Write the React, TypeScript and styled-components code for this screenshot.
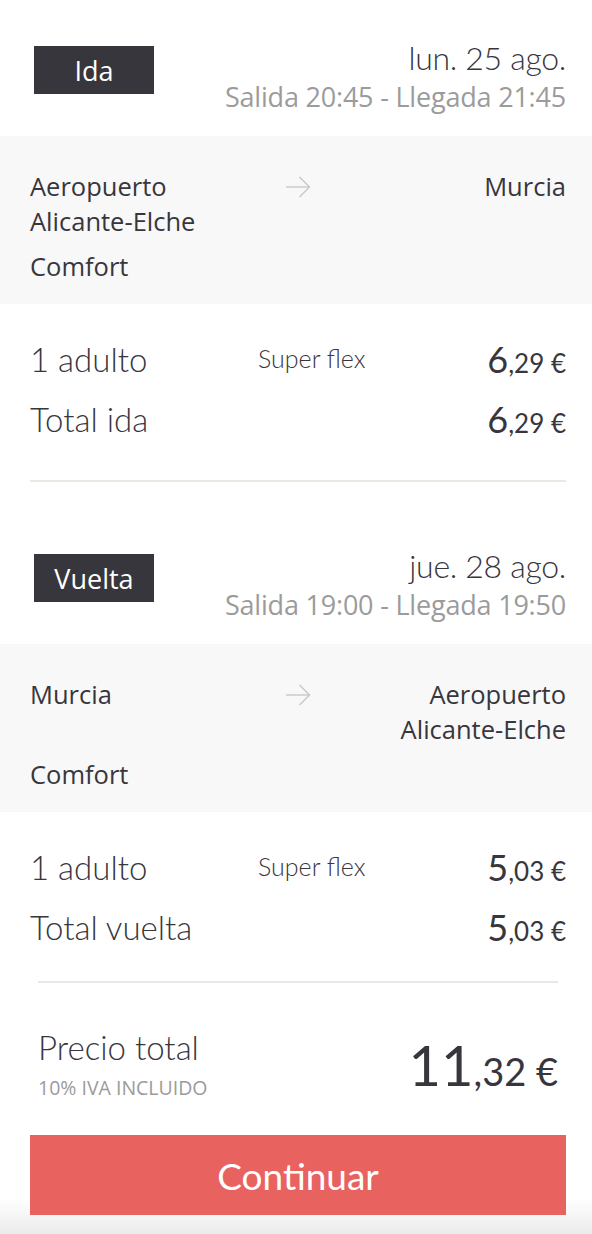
import React from 'react';
import styled, { createGlobalStyle } from 'styled-components';

const GlobalStyle = createGlobalStyle`
  html, body {
    margin: 0;
    padding: 0;
    background: #ffffff;
  }
  * {
    box-sizing: border-box;
  }
`;

const TITLE_FONT = `Lato, "Open Sans", sans-serif`;
const BODY_FONT = `"Open Sans", "Noto Sans", sans-serif`;

interface Trip {
  label: string;
  date: string;
  times: string;
  origin: string[];
  destination: string[];
  fare: string;
  passengers: string;
  fareType: string;
  unit: [string, string];
  totalLabel: string;
}

const trips: Trip[] = [
  {
    label: 'Ida',
    date: 'lun. 25 ago.',
    times: 'Salida 20:45 - Llegada 21:45',
    origin: ['Aeropuerto', 'Alicante-Elche'],
    destination: ['Murcia'],
    fare: 'Comfort',
    passengers: '1 adulto',
    fareType: 'Super flex',
    unit: ['6', ',29 €'],
    totalLabel: 'Total ida'
  },
  {
    label: 'Vuelta',
    date: 'jue. 28 ago.',
    times: 'Salida 19:00 - Llegada 19:50',
    origin: ['Murcia'],
    destination: ['Aeropuerto', 'Alicante-Elche'],
    fare: 'Comfort',
    passengers: '1 adulto',
    fareType: 'Super flex',
    unit: ['5', ',03 €'],
    totalLabel: 'Total vuelta'
  }
];

const Page = styled.div`
  width: 592px;
  min-height: 1234px;
  display: flex;
  flex-direction: column;
  color: #38363d;
`;

const TripHeader = styled.div`
  display: flex;
  justify-content: space-between;
  align-items: flex-start;
  padding: 40px 26px 23px 34px;
`;

const Badge = styled.div`
  width: 120px;
  height: 48px;
  margin-top: 6px;
  background: #38363d;
  color: #ffffff;
  font-family: ${BODY_FONT};
  font-size: 27px;
  display: flex;
  align-items: center;
  justify-content: center;
`;

const DateBlock = styled.div`
  display: flex;
  flex-direction: column;
  align-items: flex-end;
`;

const DateText = styled.div`
  font-family: ${TITLE_FONT};
  font-size: 32px;
  font-weight: 300;
  line-height: 36px;
  color: #38363d;
  letter-spacing: -0.3px;
`;

const Times = styled.div`
  margin-top: 5px;
  font-family: ${BODY_FONT};
  font-size: 27px;
  line-height: 32px;
  color: #9b9b9b;
  letter-spacing: -0.2px;
`;

const RouteBox = styled.div`
  background: #f8f8f8;
  padding: 33px 26px 20px 30px;
  font-family: ${BODY_FONT};
  font-size: 25.5px;
  line-height: 35px;
  color: #38363d;
`;

const RouteRow = styled.div`
  display: grid;
  grid-template-columns: 1fr auto 1fr;
  align-items: start;
`;

const Place = styled.div<{ $align: 'left' | 'right' }>`
  text-align: ${p => p.$align};
`;

const ArrowWrap = styled.div`
  height: 35px;
  display: flex;
  align-items: center;
  padding: 0 2px;
`;

const FareName = styled.div`
  margin-top: 10px;
`;

const Prices = styled.div`
  padding: 33px 26px 0 30px;
  display: flex;
  flex-direction: column;
  gap: 20px;
`;

const PriceRow = styled.div`
  display: grid;
  grid-template-columns: 228px 1fr auto;
  align-items: center;
  height: 40px;
`;

const RowLabel = styled.div`
  font-family: ${TITLE_FONT};
  font-size: 33px;
  font-weight: 300;
  color: #38363d;
`;

const FareType = styled.div`
  font-family: ${TITLE_FONT};
  font-size: 25px;
  font-weight: 300;
  color: #38363d;
  margin-top: -2px;
`;

const Amount = styled.div<{ $big: number; $small: number }>`
  font-family: ${TITLE_FONT};
  color: #38363d;
  white-space: nowrap;
  text-align: right;

  & > span:first-child {
    font-size: ${p => p.$big}px;
  }
  & > span:last-child {
    font-size: ${p => p.$small}px;
  }
`;

const Divider = styled.hr<{ $inset: number }>`
  border: none;
  height: 2px;
  background: #e9e9e4;
  margin: 0 ${p => 26 + p.$inset}px 0 ${p => 30 + p.$inset}px;
`;

const TripGap = styled.div`
  padding: 43px 0 26px;
`;

const Summary = styled.div`
  margin-top: 36px;
  display: flex;
  flex-direction: column;
  flex: 1;
  background: linear-gradient(to bottom, #ffffff 0%, #ffffff 86%, #ebebeb 100%);
`;

const TotalRow = styled.div`
  display: flex;
  justify-content: space-between;
  align-items: center;
  padding: 45px 34px 0 38px;
`;

const TotalLabel = styled.div`
  font-family: ${TITLE_FONT};
  font-size: 33px;
  font-weight: 300;
  line-height: 38px;
  color: #38363d;
`;

const Vat = styled.div`
  margin-top: 9px;
  font-family: ${BODY_FONT};
  font-size: 19.5px;
  line-height: 26px;
  color: #9b9b9b;
`;

const ContinueButton = styled.button`
  margin: 34px 26px 19px 30px;
  height: 80px;
  border: none;
  background: #e8625f;
  color: #ffffff;
  font-family: ${TITLE_FONT};
  font-size: 37px;
  font-weight: 400;
  cursor: pointer;
`;

const Arrow = () => (
  <svg width="26" height="22" viewBox="0 0 26 22" fill="none">
    <path d="M1 11 H24.5" stroke="#c8c8c8" strokeWidth="1.4" />
    <path d="M14.5 1 L24.5 11 L14.5 21" stroke="#c8c8c8" strokeWidth="1.4" />
  </svg>
);

const TripBlock: React.FC<{ trip: Trip }> = ({ trip }) => (
  <section>
    <TripHeader>
      <Badge>{trip.label}</Badge>
      <DateBlock>
        <DateText>{trip.date}</DateText>
        <Times>{trip.times}</Times>
      </DateBlock>
    </TripHeader>
    <RouteBox>
      <RouteRow>
        <Place $align="left">
          {trip.origin.map(line => (
            <div key={line}>{line}</div>
          ))}
        </Place>
        <ArrowWrap>
          <Arrow />
        </ArrowWrap>
        <Place $align="right">
          {trip.destination.map(line => (
            <div key={line}>{line}</div>
          ))}
        </Place>
      </RouteRow>
      <FareName>{trip.fare}</FareName>
    </RouteBox>
    <Prices>
      <PriceRow>
        <RowLabel>{trip.passengers}</RowLabel>
        <FareType>{trip.fareType}</FareType>
        <Amount $big={36} $small={26}>
          <span>{trip.unit[0]}</span>
          <span>{trip.unit[1]}</span>
        </Amount>
      </PriceRow>
      <PriceRow>
        <RowLabel>{trip.totalLabel}</RowLabel>
        <div />
        <Amount $big={36} $small={26}>
          <span>{trip.unit[0]}</span>
          <span>{trip.unit[1]}</span>
        </Amount>
      </PriceRow>
    </Prices>
  </section>
);

export default function App() {
  return (
    <>
      <GlobalStyle />
      <Page>
        <TripBlock trip={trips[0]} />
        <TripGap>
          <Divider $inset={0} />
        </TripGap>
        <TripBlock trip={trips[1]} />
        <Summary>
          <Divider $inset={8} />
          <TotalRow>
            <div>
              <TotalLabel>Precio total</TotalLabel>
              <Vat>10% IVA INCLUIDO</Vat>
            </div>
            <Amount $big={56} $small={38}>
              <span>11</span>
              <span>,32 €</span>
            </Amount>
          </TotalRow>
          <ContinueButton>Continuar</ContinueButton>
        </Summary>
      </Page>
    </>
  );
}
